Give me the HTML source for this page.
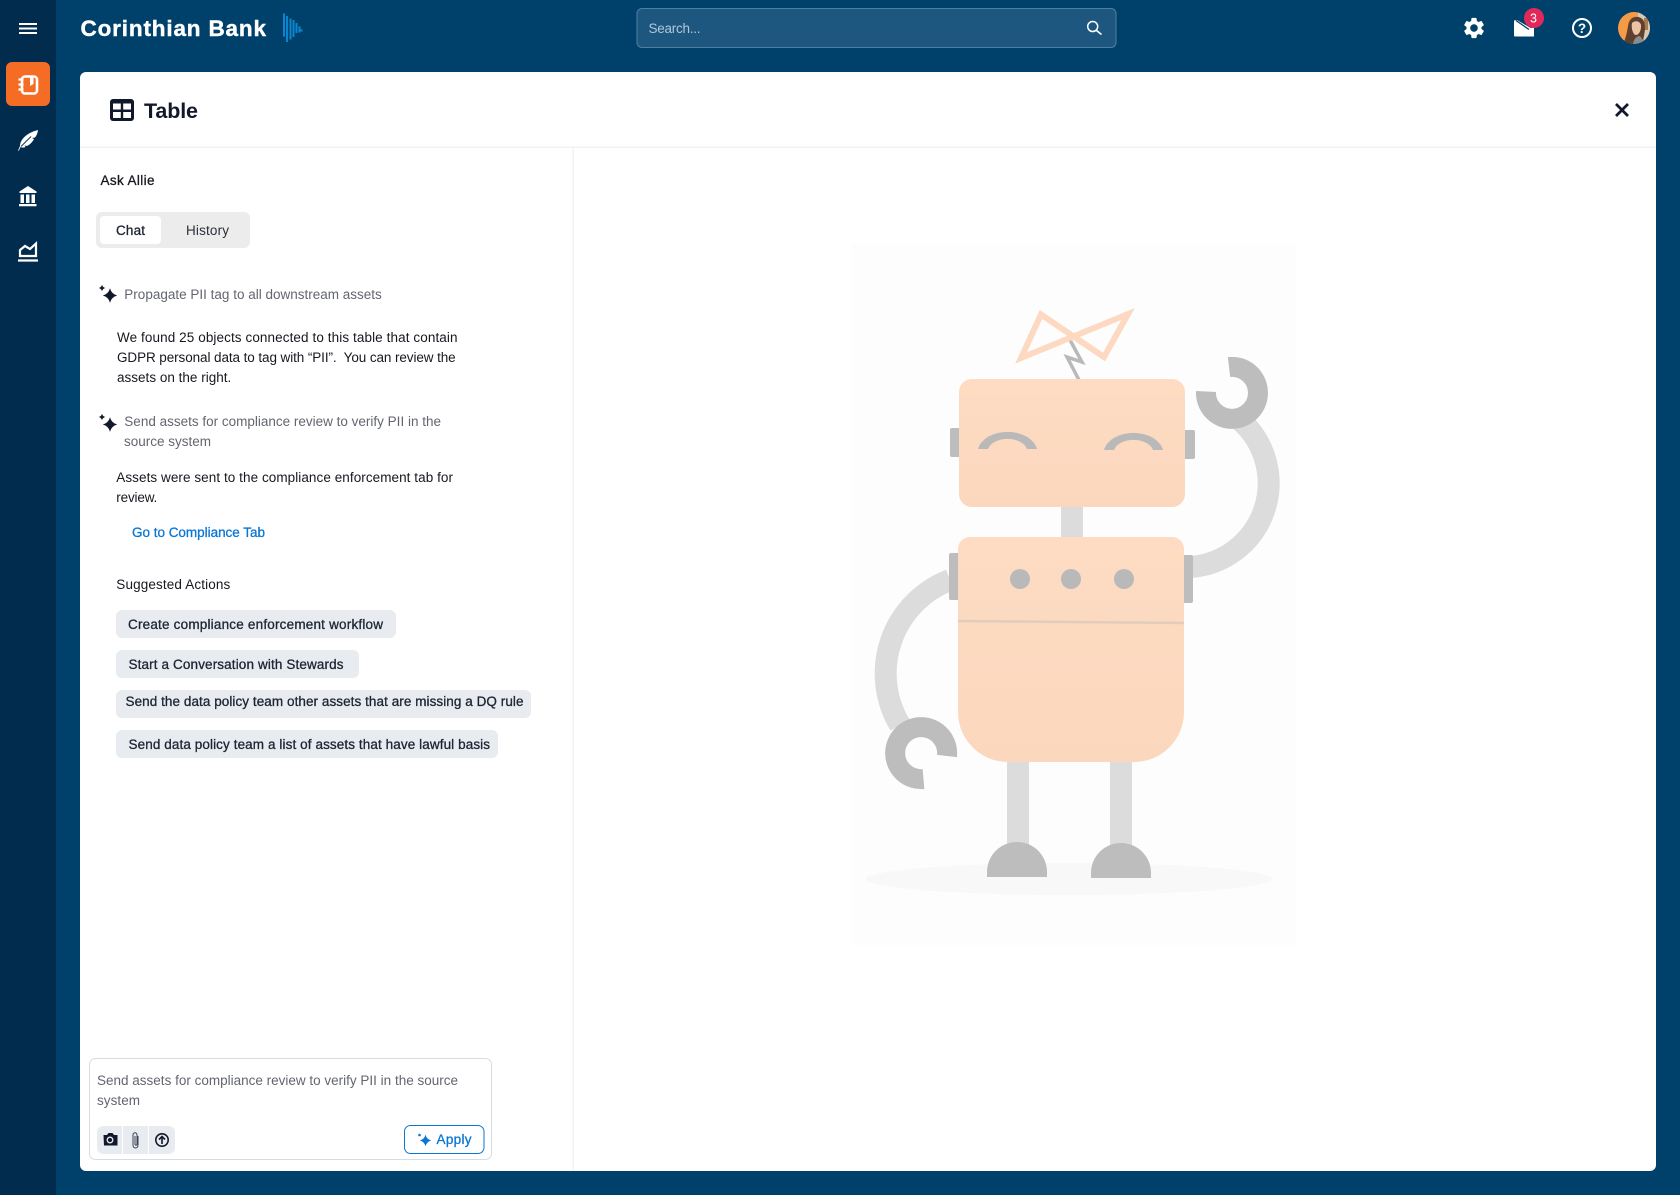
<!DOCTYPE html>
<html lang="en"><head><meta charset="utf-8"><title>Corinthian Bank - Table</title>
<style>
html,body{margin:0;padding:0;width:1680px;height:1195px;overflow:hidden;background:#00416c}
svg{display:block}
text{font-family:"Liberation Sans",sans-serif;font-size:13.5px;fill:#15181f}
.g{fill:#63666f}
.m{stroke:#1d2433;stroke-width:.3px;fill:#1d2433}
</style></head><body>
<svg width="1680" height="1195" viewBox="0 0 1680 1195" xmlns="http://www.w3.org/2000/svg">
<defs>
<clipPath id="av"><circle cx="1634" cy="28" r="16"/></clipPath>
<path id="spark" d="M0-7.2Q1.500-1.500 7.200 0 1.500 1.500 0 7.200-1.500 1.500-7.200 0-1.500-1.500 0-7.200Z"/>
<linearGradient id="pe" x1="0" y1="0" x2="0" y2="1"><stop offset="0" stop-color="#fddcc3"/><stop offset="1" stop-color="#fbd7bd"/></linearGradient>
</defs>
<rect width="1680" height="1195" fill="#00416c"/>
<rect width="56" height="1195" fill="#022c4e"/>
<!-- sidebar -->
<path d="M19 24h18M19 28.500h18M19 33h18" stroke="#fff" stroke-width="2"/>
<rect x="6" y="62" width="44" height="44" rx="6" fill="#f56d25"/>
<rect x="22" y="76.500" width="15" height="17" rx="3" fill="none" stroke="#fff" stroke-width="2.600"/>
<path d="M18.500 79.500h5M18.500 84.500h5M18.500 89.500h5" stroke="#fff" stroke-width="2.200"/>
<path d="M30 76v10l3.500-2V76Z" fill="#fff"/>
<path d="M18 150.500L20 146C20 140 26 133 38 130C37.500 133.500 36.500 135.500 35 137.500L32 138L34 139C32.500 142 30 144.500 27 146L24.500 145.500L25.500 147C23.500 148 21.500 147.500 20.500 147L18.800 150.800Z" fill="#fff"/>
<path d="M21 146.500L31 136.500" stroke="#022c4e" stroke-width=".9"/>
<path d="M28 186l8.500 5.500v1.500h-17v-1.500Z" fill="#fff"/>
<path d="M19 204h17.500v2.200H19ZM20.500 194.500h3.500v8.500h-3.500ZM26 194.500h3.500v8.500H26ZM31.500 194.500h3.500v8.500h-3.500Z" fill="#fff"/>
<path d="M20 256v-6l5-4 5 3 6-5.500V256Z" fill="none" stroke="#fff" stroke-width="2.200"/>
<path d="M18 260.500h20" stroke="#fff" stroke-width="2.200"/>
<!-- logo -->
<text x="80.500" y="36" textLength="185.500" lengthAdjust="spacing" style="font-size:22.500px;font-weight:700;fill:#fff;stroke:#fff;stroke-width:.4px">Corinthian Bank</text>
<path d="M284 13.500v23M287 16v26M290.500 18.500v21M293.500 20v17M296.500 23v10M299.500 26.500v6M301.500 29.500v2" stroke="#0a85d1" stroke-width="2" fill="none"/>
<!-- search -->
<rect x="637" y="8.500" width="479" height="39" rx="5" fill="#1d5780" stroke="#4f7fa0"/>
<text x="648.500" y="33" textLength="52" lengthAdjust="spacing" style="fill:#b1c7d7">Search...</text>
<circle cx="1092.700" cy="26.500" r="5" fill="none" stroke="#fff" stroke-width="1.500"/><path d="M1096.500 30.500l5 4" stroke="#fff" stroke-width="1.600"/>
<!-- right icons -->
<path transform="translate(1474 28) scale(1.050) translate(-12 -12)" fill="#fff" d="M19.140 12.940c.04-.3.06-.61.06-.94 0-.32-.02-.64-.07-.94l2.030-1.580c.18-.14.23-.41.12-.61l-1.920-3.320c-.12-.22-.37-.29-.59-.22l-2.390.96c-.5-.38-1.030-.7-1.620-.94l-.36-2.540c-.04-.24-.24-.41-.48-.41h-3.840c-.24 0-.43.17-.47.41l-.36 2.540c-.59.24-1.130.57-1.620.94l-2.390-.96c-.22-.08-.47 0-.59.22L2.740 8.870c-.12.21-.08.47.12.61l2.030 1.580c-.05.3-.09.63-.09.94s.02.64.07.94l-2.030 1.580c-.18.14-.23.41-.12.61l1.920 3.320c.12.22.37.29.59.22l2.390-.96c.5.38 1.030.7 1.620.94l.36 2.540c.05.24.24.41.48.41h3.840c.24 0 .44-.17.47-.41l.36-2.540c.59-.24 1.130-.56 1.620-.94l2.390.96c.22.08.47 0 .59-.22l1.920-3.320c.12-.22.07-.47-.12-.61l-2.010-1.580zM12 15.600c-1.980 0-3.600-1.620-3.600-3.600s1.620-3.600 3.600-3.600 3.600 1.620 3.600 3.600-1.620 3.600-3.600 3.600z"/>
<path d="M1514 20.500l3-.5 17 10v6.500h-19a1 1 0 0 1-1-1Z" fill="#fff"/>
<path d="M1516 21l13 8.500 5-3V31l-4 1-14-11Z" fill="#fff"/>
<path d="M1516 20.500l13 9" stroke="#00416c" stroke-width="1.300"/>
<circle cx="1534" cy="18" r="10" fill="#e1285a"/>
<text x="1530" y="22.500" style="font-size:12.500px;fill:#fff">3</text>
<circle cx="1582" cy="28" r="9" fill="none" stroke="#fff" stroke-width="2"/>
<text x="1582" y="33" text-anchor="middle" style="font-size:13.500px;font-weight:700;fill:#fff">?</text>
<g clip-path="url(#av)">
<rect x="1618" y="12" width="32" height="32" fill="#f59a47"/>
<rect x="1638" y="12" width="12" height="32" fill="#d8c8b4"/>
<rect x="1644" y="18" width="4" height="12" fill="#a87a50"/>
<path d="M1623 44c3-6 4-12 5-18 1-7 5-10 10-9 6 1 7 6 7 11 0 5-2 10-2 16Z" fill="#5d4030"/>
<path d="M1632 23c3-3 8-2 9 2 .5 5-2 10-5 10s-5-7-4-12Z" fill="#eec3a3"/>
<path d="M1633 44c1-6 4-8 7-8l6 8Z" fill="#8b8b8b"/>
</g>
<!-- card -->
<rect x="80" y="72" width="1576" height="1099" rx="6" fill="#fff"/>
<rect x="80" y="146.500" width="1576" height="1.500" fill="#eff3f6"/>
<rect x="572.500" y="148" width="1.500" height="1023" fill="#f1f3f5"/>
<rect x="110" y="99" width="24" height="22" rx="3" fill="#12182b"/>
<path d="M113 103.500h7.800v6H113ZM123.200 103.500h7.800v6h-7.800ZM113 112h7.800v6H113ZM123.200 112h7.800v6h-7.800Z" fill="#fff"/>
<text x="144" y="118" textLength="54" lengthAdjust="spacing" style="font-size:21.500px;font-weight:700;fill:#12182b">Table</text>
<path d="M1616 104l12 12M1628 104l-12 12" stroke="#12182b" stroke-width="2.700"/>
<!-- left panel -->
<text x="100.500" y="185" textLength="54" lengthAdjust="spacing" class="m" style="stroke:#15181f;fill:#15181f">Ask Allie</text>
<rect x="96" y="212" width="154" height="36" rx="6" fill="#ececec"/>
<rect x="100" y="216" width="61" height="28" rx="4" fill="#fff"/>
<text x="116" y="235" textLength="29" lengthAdjust="spacing" class="m">Chat</text>
<text x="186" y="235" textLength="43" lengthAdjust="spacing" style="fill:#2b2f3a">History</text>
<use href="#spark" x="110" y="295.500" fill="#12182b"/>
<use href="#spark" transform="translate(102 288) scale(.45)" fill="#12182b"/>
<text x="124.300" y="299" textLength="257.500" lengthAdjust="spacing" class="g">Propagate PII tag to all downstream assets</text>
<text x="117" y="342" textLength="340.500" lengthAdjust="spacing">We found 25 objects connected to this table that contain</text>
<text x="117" y="362" textLength="338.700" lengthAdjust="spacing" xml:space="preserve">GDPR personal data to tag with “PII”.  You can review the</text>
<text x="117" y="382" textLength="114.300" lengthAdjust="spacing">assets on the right.</text>
<use href="#spark" x="110" y="424.500" fill="#12182b"/>
<use href="#spark" transform="translate(102 417) scale(.45)" fill="#12182b"/>
<text x="124.300" y="426" textLength="316.700" lengthAdjust="spacing" class="g">Send assets for compliance review to verify PII in the</text>
<text x="124" y="446" textLength="87" lengthAdjust="spacing" class="g">source system</text>
<text x="116.300" y="482" textLength="336.700" lengthAdjust="spacing">Assets were sent to the compliance enforcement tab for</text>
<text x="116.300" y="502" textLength="41" lengthAdjust="spacing">review.</text>
<text x="132" y="537" textLength="133" lengthAdjust="spacing" style="fill:#0a77d5;stroke:#0a77d5;stroke-width:.3px">Go to Compliance Tab</text>
<text x="116.300" y="589" textLength="114" lengthAdjust="spacing">Suggested Actions</text>
<rect x="116" y="610" width="280" height="28" rx="6" fill="#e8ecf0"/>
<text x="128" y="629" textLength="255" lengthAdjust="spacing" class="m">Create compliance enforcement workflow</text>
<rect x="116" y="650" width="243" height="28" rx="6" fill="#e8ecf0"/>
<text x="128.500" y="669" textLength="215" lengthAdjust="spacing" class="m">Start a Conversation with Stewards</text>
<rect x="116" y="690" width="415" height="28" rx="6" fill="#e8ecf0"/>
<text x="125.500" y="706" textLength="398" lengthAdjust="spacing" class="m">Send the data policy team other assets that are missing a DQ rule</text>
<rect x="116" y="730" width="382" height="28" rx="6" fill="#e8ecf0"/>
<text x="128.500" y="749" textLength="361.500" lengthAdjust="spacing" class="m">Send data policy team a list of assets that have lawful basis</text>
<!-- input -->
<rect x="89.500" y="1058.500" width="402" height="101" rx="6" fill="#fff" stroke="#d5dde3"/>
<text x="97" y="1085" textLength="361" lengthAdjust="spacing" class="g">Send assets for compliance review to verify PII in the source</text>
<text x="97" y="1105" textLength="43" lengthAdjust="spacing" class="g">system</text>
<rect x="97" y="1126" width="78" height="28" rx="6" fill="#e8ecf0"/>
<path d="M122.500 1126v28M148.500 1126v28" stroke="#fff" stroke-width="1"/>
<path d="M103.500 1135h3.500l1.500-2h4l1.500 2h3.500v10.500h-13.500Z" fill="#12182b"/>
<circle cx="110" cy="1140" r="2.800" fill="none" stroke="#e8ecf0" stroke-width="1.300"/>
<path d="M138.500 1137v9c0 4-5 4-5 0v-10c0-3 4-3 4 0v9c0 1.500-2 1.500-2 0v-8" fill="none" stroke="#3a4050" stroke-width="1" transform="translate(-.5 -1)"/>
<circle cx="162" cy="1140" r="6.200" fill="none" stroke="#12182b" stroke-width="1.600"/>
<path d="M162 1144v-7M159 1139.500l3-3 3 3" fill="none" stroke="#12182b" stroke-width="1.600"/>
<rect x="404.500" y="1125.500" width="79.500" height="28" rx="6" fill="#fff" stroke="#0a77d5"/>
<use href="#spark" transform="translate(425.500 1140.500) scale(.8)" fill="#0a77d5"/>
<circle cx="419.500" cy="1135" r="1.300" fill="#0a77d5"/>
<text x="436.500" y="1144" textLength="35" lengthAdjust="spacing" style="fill:#0a77d5;stroke:#0a77d5;stroke-width:.3px">Apply</text>
<!-- robot -->
<rect x="852" y="243" width="444" height="702" fill="#fdfdfd"/>
<ellipse cx="1069" cy="879" rx="203" ry="16" fill="#f8f8f8"/>
<path d="M1240 420A84 84 0 0 1 1190 567" fill="none" stroke="#dcdcdc" stroke-width="22"/>
<path d="M950 580A100 100 0 0 0 900 725" fill="none" stroke="#dcdcdc" stroke-width="22"/>
<path d="M1229 367A26 26 0 1 1 1206 391.500" fill="none" stroke="#bdbdbd" stroke-width="20"/>
<path d="M947 756A26 26 0 1 0 923.500 779" fill="none" stroke="#bdbdbd" stroke-width="20"/>
<rect x="1061" y="500" width="22" height="45" fill="#dcdcdc"/>
<rect x="1007" y="755" width="22" height="92" fill="#dcdcdc"/>
<rect x="1110" y="755" width="22" height="92" fill="#dcdcdc"/>
<path d="M987 877v-5a30 30 0 0 1 60 0v5Z" fill="#bdbdbd"/>
<path d="M1091 878v-5a30 30 0 0 1 60 0v5Z" fill="#bdbdbd"/>
<rect x="950" y="428" width="14" height="29" rx="2" fill="#bdbdbd"/>
<rect x="1180" y="430" width="15" height="29" rx="2" fill="#bdbdbd"/>
<rect x="949" y="553" width="14" height="47" rx="2" fill="#bdbdbd"/>
<rect x="1179" y="555" width="14" height="48" rx="2" fill="#bdbdbd"/>
<path d="M1070 340l12 22-15-5 12 23" fill="none" stroke="#b9b9b9" stroke-width="3.500"/>
<path d="M1041 314.500L1104 357 1128 314 1021 358Z" fill="none" stroke="#fcd9c0" stroke-width="6" stroke-linejoin="miter" stroke-miterlimit="10"/>
<rect x="959" y="379" width="226" height="128" rx="13" fill="url(#pe)"/>
<path d="M958 549a12 12 0 0 1 12-12h202a12 12 0 0 1 12 12v163a50 50 0 0 1-50 50H1008a50 50 0 0 1-50-50Z" fill="url(#pe)"/>
<path d="M958 621l226 2" stroke="#e2cdbd" stroke-width="2.500"/>
<circle cx="1020" cy="579" r="10" fill="#b9b9b9"/><circle cx="1071" cy="579" r="10" fill="#b9b9b9"/><circle cx="1124" cy="579" r="10" fill="#b9b9b9"/>
<path d="M978 449A30 21 0 0 1 1037 449H1027A20 13 0 0 0 988 449Z" fill="#b9b9b9"/>
<path d="M1104 450A30 21 0 0 1 1163 450H1153A20 13 0 0 0 1114 450Z" fill="#b9b9b9"/>
</svg>
</body></html>
